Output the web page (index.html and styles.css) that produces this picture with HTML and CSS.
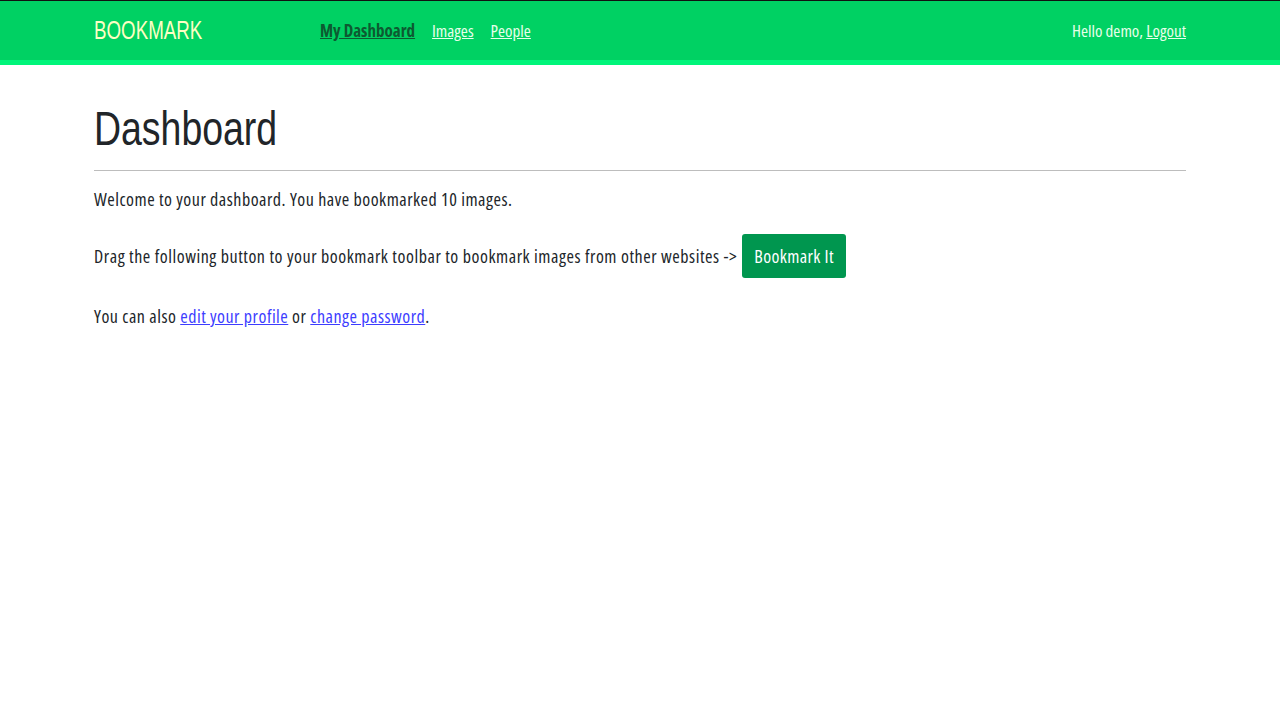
FILE: index.html
```html
<!DOCTYPE html>
<html lang="en">
<head>
<meta charset="utf-8">
<title>Dashboard</title>
<link rel="stylesheet" href="styles.css">
</head>
<body>
<header class="topbar">
  <div class="topbar-inner">
    <div class="brand-box"><a class="brand" href="#">BOOKMARK</a></div>
    <ul class="menu">
      <li><a class="menu-link active" href="#">My Dashboard</a></li>
      <li><a class="menu-link" href="#">Images</a></li>
      <li><a class="menu-link" href="#">People</a></li>
    </ul>
    <div class="user">Hello demo, <a class="menu-link" href="#">Logout</a></div>
  </div>
</header>
<main class="content">
  <h1 class="title">Dashboard</h1>
  <hr class="rule">
  <p class="text">Welcome to your dashboard. You have bookmarked 10 images.</p>
  <p class="text drag">Drag the following button to your bookmark toolbar to bookmark images from other websites -&gt; <a class="button" href="#">Bookmark It</a></p>
  <p class="text last">You can also <a class="link" href="#">edit your profile</a> or <a class="link" href="#">change password</a>.</p>
</main>
</body>
</html>
```

FILE: styles.css
```css
html, body {
  margin: 0;
  padding: 0;
  background: #ffffff;
}
body {
  font-family: "Open Sans", "Noto Sans", sans-serif;
  color: #212529;
}
.topbar {
  border-top: 1px solid #111111;
  background: #00d163;
  border-bottom: 5px solid #00f57a;
}
.topbar-inner {
  height: 59px;
  display: flex;
  align-items: center;
  padding: 0 94px;
  font-size: 17px;
  font-stretch: 75%;
}
.brand-box {
  width: 226px;
}
.brand {
  display: inline-block;
  font-family: "Liberation Sans", "Arial", sans-serif;
  font-size: 25px;
  font-stretch: 100%;
  color: #fdffc4;
  text-decoration: none;
  transform: scaleX(0.75);
  transform-origin: left center;
}
.menu {
  display: flex;
  gap: 17px;
  list-style: none;
  margin: 0;
  padding: 0;
}
.menu-link {
  color: #e8ffea;
  text-decoration: underline;
}
.menu-link.active {
  font-weight: bold;
  color: #0d5a31;
}
.user {
  margin-left: auto;
  color: #e8ffea;
}
.content {
  padding: 0 94px;
}
.title {
  display: block;
  font-family: "Liberation Sans", "Arial", sans-serif;
  font-weight: normal;
  font-size: 48px;
  margin: 0;
  line-height: 48px;
  padding-top: 40px;
  color: #212529;
  transform: scaleX(0.78);
  transform-origin: left center;
}
.rule {
  border: 0;
  border-top: 1px solid #bdbdbd;
  margin: 17px 0 0;
}
.text {
  font-size: 18px;
  font-stretch: 75%;
  letter-spacing: 0.5px;
  margin: 16px 0 0;
  line-height: 24px;
}
.drag {
  margin-top: 23px;
  display: flex;
  align-items: center;
  gap: 5px;
  letter-spacing: 0.55px;
}
.last {
  margin-top: 26px;
}
.button {
  display: inline-block;
  background: #00964f;
  color: #ffffff;
  text-decoration: none;
  font-size: 18px;
  font-stretch: 75%;
  letter-spacing: 0.4px;
  line-height: 24px;
  padding: 10px 12px;
  border-radius: 3px;
}
.link {
  color: #3d3dff;
}
```
